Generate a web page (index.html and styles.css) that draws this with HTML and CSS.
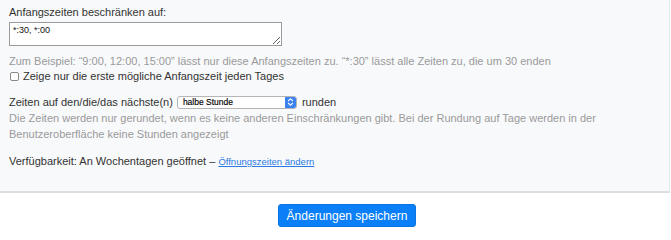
FILE: index.html
```html
<!DOCTYPE html>
<html lang="de">
<head>
<meta charset="utf-8">
<link rel="stylesheet" href="styles.css">
</head>
<body>
<div class="panel">
  <div class="field">
    <label class="label">Anfangszeiten beschränken auf:</label>
    <textarea class="times">*:30, *:00</textarea>
    <div class="help">Zum Beispiel: “9:00, 12:00, 15:00” lässt nur diese Anfangszeiten zu. “*:30” lässt alle Zeiten zu, die um 30 enden</div>
    <label class="check"><span class="box"></span>Zeige nur die erste mögliche Anfangszeit jeden Tages</label>
  </div>
  <div class="field round">
    <div class="row">Zeiten auf den/die/das nächste(n)
      <span class="select"><span class="sel-text">halbe Stunde</span><span class="cap"><svg width="7" height="10" viewBox="0 0 7 10"><path d="M1.2 4 L3.5 1.7 L5.8 4 M1.2 6 L3.5 8.3 L5.8 6" fill="none" stroke="#fff" stroke-width="1.1"/></svg></span></span>
      runden</div>
    <div class="help">Die Zeiten werden nur gerundet, wenn es keine anderen Einschränkungen gibt. Bei der Rundung auf Tage werden in der Benutzeroberfläche keine Stunden angezeigt</div>
  </div>
  <div class="avail">Verfügbarkeit: An Wochentagen geöffnet – <a href="#" class="link">Öffnungszeiten ändern</a></div>
</div>
<div class="footer">
  <button class="save">Änderungen speichern</button>
</div>
</body>
</html>
```
FILE: styles.css
```css
html, body {
  margin: 0;
  padding: 0;
  background: #fff;
  font-family: "Liberation Sans", Arial, sans-serif;
  font-size: 11px;
  color: #333;
}
.panel {
  background: #f8f9fa;
  border-bottom: 2px solid #dcdfe2;
  border-right: 1px solid #e5e7ea;
  width: 670px;
  padding: 4px 9px 0 9px;
  box-sizing: border-box;
  height: 193px;
}
.label {
  display: block;
  line-height: 16px;
  color: #333;
}
.times {
  display: block;
  width: 273px;
  height: 24px;
  box-sizing: border-box;
  margin: 2px 0 0 0;
  border: 1px solid #9a9a9a;
  padding: 2px 3px;
  font-family: "Liberation Sans", Arial, sans-serif;
  font-size: 9px;
  color: #111;
  background: #fff;
  resize: vertical;
}
.help {
  color: #9a9a9a;
  line-height: 15px;
  margin-top: 8px;
}
.check {
  display: flex;
  align-items: center;
  gap: 4px;
  line-height: 15px;
}
.box {
  width: 7px;
  height: 7px;
  border: 1px solid #8a8a8a;
  border-radius: 2px;
  background: #fff;
  margin-left: 1px;
}
.round {
  margin-top: 10px;
}
.row {
  display: flex;
  align-items: center;
  gap: 3px;
  line-height: 16px;
}
.select {
  display: inline-flex;
  align-items: stretch;
  width: 120px;
  height: 13px;
  border: 1px solid #b5b5b5;
  border-radius: 3px;
  background: #fff;
  box-sizing: border-box;
  margin: 0 2px 0 1px;
  overflow: hidden;
}
.sel-text {
  flex: 1;
  font-size: 8.5px;
  line-height: 11px;
  padding-left: 5px;
  color: #000;
  -webkit-text-stroke: 0.15px #000;
}
.cap {
  width: 11px;
  background: #3b82f0;
  display: flex;
  align-items: center;
  justify-content: center;
}
.round .help {
  margin-top: 0;
  line-height: 16px;
}
.avail {
  margin-top: 11px;
  line-height: 16px;
}
.link {
  color: #2a7ae2;
  font-size: 9.5px;
  text-decoration: underline;
}
.footer {
  display: flex;
  justify-content: center;
  padding-top: 11px;
}
.save {
  background: #0b7ff7;
  color: #fff;
  border: 1px solid #0a74e3;
  border-radius: 3px;
  font-family: "Liberation Sans", Arial, sans-serif;
  font-size: 12px;
  height: 23px;
  width: 138px;
  padding: 0;
  margin-left: 23px;
}
```
